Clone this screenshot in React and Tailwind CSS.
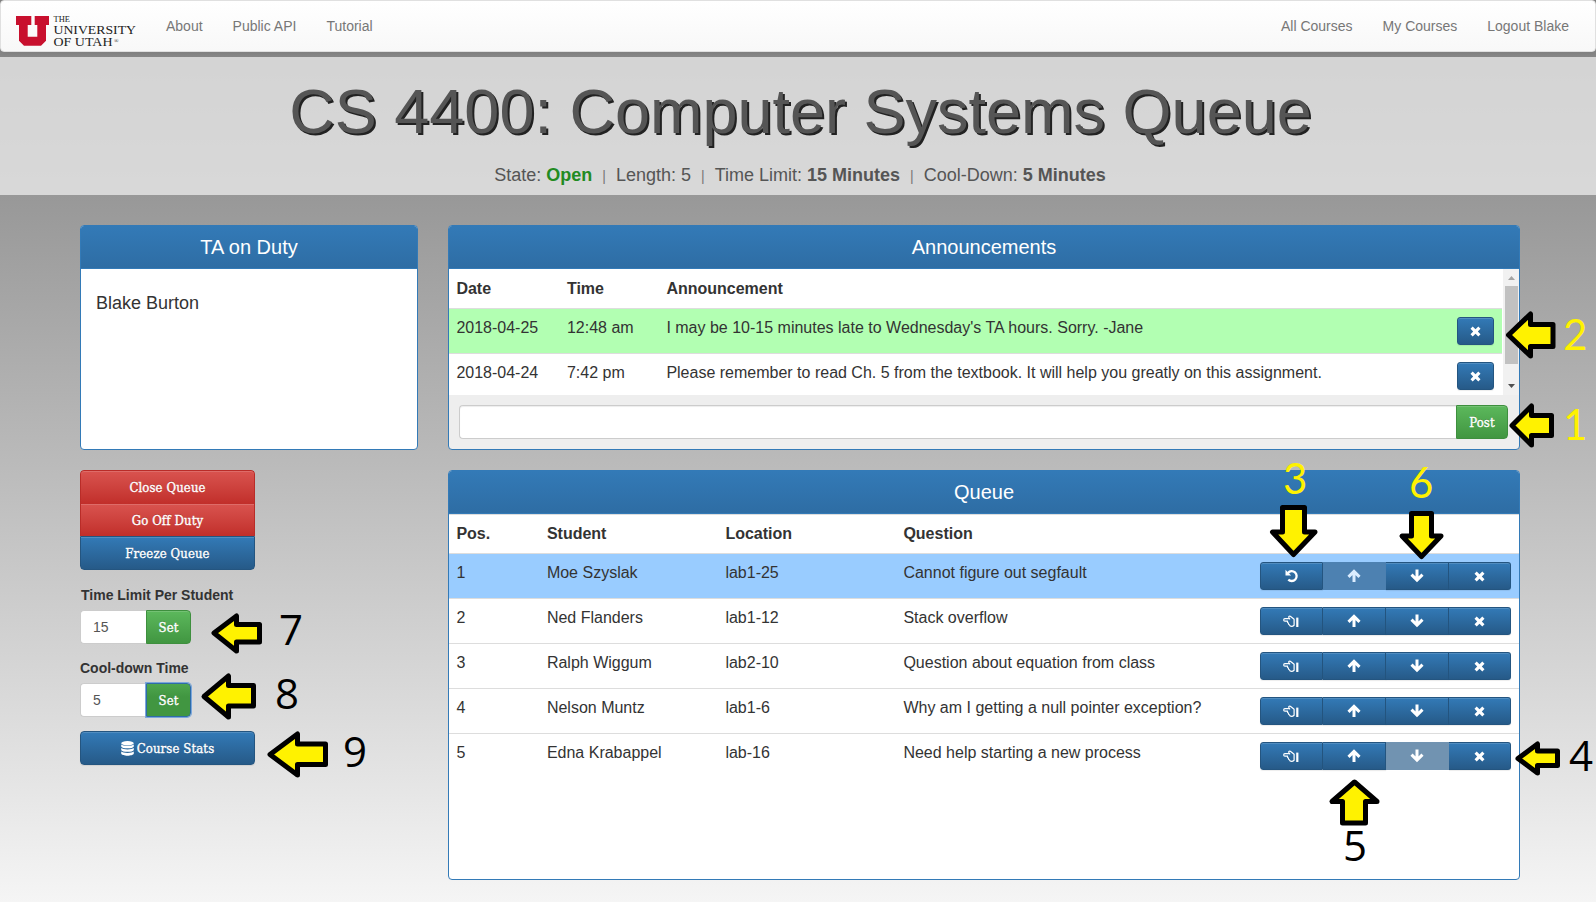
import React from "react";

const blueBtn =
  "flex items-center justify-center border border-[#245580] bg-gradient-to-b from-[#337ab7] to-[#265a88] text-white shadow-[inset_0_1px_0_rgba(255,255,255,0.15),0_1px_1px_rgba(0,0,0,0.075)]";
const disabledBtn =
  "flex items-center justify-center border border-[#265a88] bg-[#265a88] text-white opacity-65";
const redBtn =
  "flex items-center justify-center border border-[#b92c28] bg-gradient-to-b from-[#d9534f] to-[#c12e2a] text-white shadow-[inset_0_1px_0_rgba(255,255,255,0.15)]";
const greenBtn =
  "flex items-center justify-center border border-[#3e8f3e] bg-gradient-to-b from-[#5cb85c] to-[#419641] text-white shadow-[inset_0_1px_0_rgba(255,255,255,0.15)]";
const serif =
  "font-['DejaVu_Serif_Condensed','DejaVu_Serif',serif] text-[13px] tracking-[0.12px] [-webkit-text-stroke:0.35px_white] [text-shadow:0_-1px_0_rgba(0,0,0,0.2)]";

const Times = () => (
  <svg width="11" height="11" viewBox="0 0 11 11" className="block fill-white">
    <path d="M2.7 0.6 5.5 3.3 8.3 0.6 10.5 2.8 7.8 5.5 10.5 8.2 8.3 10.4 5.5 7.7 2.7 10.4 0.5 8.2 3.2 5.5 0.5 2.8z" />
  </svg>
);
const Up = () => (
  <svg width="14" height="14" viewBox="0 0 14 14" className="block">
    <path d="M7 13V3M1.500 7.900 7 2.400l5.500 5.500" fill="none" stroke="currentColor" strokeWidth="3" />
  </svg>
);
const Down = () => (
  <svg width="14" height="14" viewBox="0 0 14 14" className="block">
    <path d="M7 0.500v10M1.500 5.600 7 11.100l5.500-5.500" fill="none" stroke="currentColor" strokeWidth="3" />
  </svg>
);
const Undo = () => (
  <svg width="14" height="14" viewBox="0 0 14 14" className="block">
    <path d="M3 3.900A4.900 4.900 0 1 1 3.300 10.600" fill="none" stroke="currentColor" strokeWidth="2.300" />
    <path d="M0.500 0.800v5.600h5.600z" fill="currentColor" />
  </svg>
);
const Hand = () => (
  <svg width="16" height="14" viewBox="0 0 16 14" className="-ml-[2px] block" fill="none" stroke="currentColor" strokeWidth="1.200">
    <path d="M5.800 4.700H1.900a1.200 1.200 0 0 0 0 2.400h2.700c-.4.800 0 1.800.8 2-.1.900.3 1.500 1 1.700.3 1 1.100 1.500 2.200 1.500 1 0 1.700-.400 2.500-1.100V5.200L7.700 2.500C6.700 1.500 5.300 2.400 5.800 3.500l1.200 1.800" strokeLinejoin="round" />
    <path d="M14.300 3.600v9.400" strokeWidth="2.200" />
  </svg>
);
const Database = () => (
  <svg width="13" height="15" viewBox="0 0 13 15" className="block fill-white">
    <ellipse cx="6.500" cy="2.200" rx="6.300" ry="2.200" />
    <path d="M0.200 3.600c1.500 1.700 11.100 1.700 12.600 0v1.800c-.5 2.600-12.100 2.600-12.600 0zM0.200 7.100c1.500 1.700 11.100 1.700 12.600 0v1.800c-.5 2.600-12.100 2.600-12.600 0zM0.200 10.600c1.500 1.700 11.100 1.700 12.600 0v2c-.5 2.900-12.100 2.900-12.600 0z" />
  </svg>
);

function Heading({ children }) {
  return (
    <div className="flex h-[43px] shrink-0 items-center justify-center border-b border-[#337ab7] bg-gradient-to-b from-[#337ab7] to-[#2e6da4] text-[20px] leading-[22px] text-white">
      {children}
    </div>
  );
}

const students = [
  ["1", "Moe Szyslak", "lab1-25", "Cannot figure out segfault"],
  ["2", "Ned Flanders", "lab1-12", "Stack overflow"],
  ["3", "Ralph Wiggum", "lab2-10", "Question about equation from class"],
  ["4", "Nelson Muntz", "lab1-6", "Why am I getting a null pointer exception?"],
  ["5", "Edna Krabappel", "lab-16", "Need help starting a new process"],
];
const queueCols = "grid grid-cols-[90.5px_178.500px_178px_357px_1fr] pl-[7.400px]";
const annCols = "grid grid-cols-[110.5px_99.500px_1fr_45px] pl-[7.400px]";

// Each arrow is an outlined polygon drawn in page coordinates.
const arrows = [
  "1508.500,335 1530.5,314 1530.5,324.5 1553,324.5 1553,346.5 1530.5,346.5 1530.5,356",
  "1512,425.500 1531.5,406 1531.500,415.5 1551.5,415.5 1551.5,435.5 1531.5,435.5 1531.5,445",
  "1293.500,554.500 1272.5,532 1282.500,532 1282.500,507.500 1304.500,507.500 1304.500,532 1315,532",
  "1421.500,556.500 1402,536 1411.500,536 1411.500,513.500 1431.500,513.500 1431.500,536 1441,536",
  "1518,758.500 1537.500,744 1537.500,751 1557.500,751 1557.500,765.500 1537.500,765.500 1537.500,773",
  "1354.500,782 1332,801.500 1342.500,801.500 1342.500,823 1365.500,823 1365.500,801.500 1377,801.500",
  "214,633 236.500,616 236.500,624.500 259.500,624.500 259.500,642 236.500,642 236.500,651",
  "204,696.500 228.500,676 228.500,685.500 253.500,685.500 253.500,706 228.500,706 228.500,717",
  "270,754.500 297.500,734 297.500,744 325.500,744 325.500,764.500 297.500,764.500 297.500,775",
];

const Num = ({ className, children }) => (
  <span className={"absolute text-[42px] leading-[42px] " + className}>{children}</span>
);

export default function App() {
  return (
    <div className="relative flex h-[902px] w-[1596px] flex-col overflow-hidden bg-gradient-to-b from-[#808080] to-[#f5f5f5] font-['Liberation_Sans',Arial,sans-serif] text-[#333]">
      <nav className="flex h-[52px] shrink-0 items-center rounded-[4px] border border-[#e0e0e0] bg-gradient-to-b from-white to-[#f8f8f8] px-[15px] text-[14px] text-[#777] shadow-[0_1px_5px_rgba(0,0,0,0.075)]">
        <svg width="122" height="38" viewBox="0 0 122 38" className="mt-[6px] shrink-0">
          <path d="M0 6H15.300V15H11.700V26.700H21.300V15H18.700V6H33V15H30V30.700L25 35.700H8L3 30.700V15H0z" fill="#c8102e" />
          <g fill="#222" fontFamily="'Liberation Serif', serif">
            <text x="37.500" y="12" fontSize="8.500" textLength="16.500" lengthAdjust="spacingAndGlyphs">THE</text>
            <text x="37.500" y="23.800" fontSize="12.800" textLength="82.500" lengthAdjust="spacingAndGlyphs">UNIVERSITY</text>
            <text x="37.500" y="35.500" fontSize="12.800" textLength="59" lengthAdjust="spacingAndGlyphs">OF UTAH</text>
            <text x="98" y="32.500" fontSize="6">®</text>
          </g>
        </svg>
        <div className="ml-[28px] flex gap-[30px]">
          <span>About</span>
          <span>Public API</span>
          <span>Tutorial</span>
        </div>
        <div className="ml-auto mr-[11px] flex gap-[30px]">
          <span>All Courses</span>
          <span>My Courses</span>
          <span>Logout Blake</span>
        </div>
      </nav>

      <header className="mt-[5px] flex h-[138px] shrink-0 flex-col items-center bg-[#eeeeee]/75 pl-[4px]">
        <h1 className="mt-[19px] pl-[1px] text-[63px] leading-[70px] whitespace-nowrap text-[#555] [text-shadow:2px_2px_0_#222]">
          CS 4400: Computer Systems Queue
        </h1>
        <div className="mt-[17px] flex items-baseline whitespace-pre text-[18px] leading-[24px] text-[#555]">
          <span>State: </span>
          <b className="text-[#228b22]">Open</b>
          <span className="px-[10px] text-[14px] text-[#777]">|</span>
          <span>Length: 5</span>
          <span className="px-[10px] text-[14px] text-[#777]">|</span>
          <span>Time Limit: </span>
          <b>15 Minutes</b>
          <span className="px-[10px] text-[14px] text-[#777]">|</span>
          <span>Cool-Down: </span>
          <b>5 Minutes</b>
        </div>
      </header>

      <main className="flex gap-[30px] pt-[30px] pl-[80px]">
        <aside className="flex w-[338px] flex-col items-start">
          <section className="flex h-[225px] w-full flex-col overflow-hidden rounded-[4px] border border-[#337ab7] bg-white">
            <Heading>TA on Duty</Heading>
            <div className="px-[15px] pt-[21px] text-[18px] leading-[26px]">Blake Burton</div>
          </section>
          <div className={"mt-[20px] flex w-[175px] flex-col overflow-hidden rounded-[4px] " + serif}>
            <div className={"h-[34px] rounded-t-[4px] border-b-0 " + redBtn}>Close Queue</div>
            <div className={"h-[32px] border-t-0 border-b-0 pt-[2px] " + redBtn}>Go Off Duty</div>
            <div className={"h-[34px] rounded-b-[4px] pt-[2px] " + blueBtn}>Freeze Queue</div>
          </div>
          <b className="mt-[15px] pl-[1px] text-[14px] leading-[20px]">Time Limit Per Student</b>
          <div className="mt-[5px] flex h-[34px] w-[111px]">
            <div className="flex w-[66px] items-center rounded-l-[4px] border border-r-0 border-[#ccc] bg-white pl-[12px] text-[14px] text-[#555]">15</div>
            <div className={"w-[45px] rounded-r-[4px] pt-[2px] " + greenBtn + " " + serif}>Set</div>
          </div>
          <b className="mt-[14px] text-[14px] leading-[20px]">Cool-down Time</b>
          <div className="mt-[5px] flex h-[34px] w-[111px]">
            <div className="flex w-[66px] items-center rounded-l-[4px] border border-r-0 border-[#ccc] bg-white pl-[12px] text-[14px] text-[#555]">5</div>
            <div className={"flex w-[45px] items-center justify-center rounded-r-[4px] border border-[#2f6ca8] bg-gradient-to-b from-[#4ea64e] to-[#419641] to-40% pt-[2px] text-white shadow-[0_0_0_1px_#7ba7dc] " + serif}>Set</div>
          </div>
          <div className={"mt-[14px] h-[34px] w-[175px] gap-[3px] rounded-[4px] " + blueBtn + " " + serif}>
            <Database />
            <span className="pt-[1px]">Course Stats</span>
          </div>
        </aside>

        <div className="flex w-[1072px] flex-col gap-[20px] text-[16px]">
          <section className="flex h-[225px] flex-col overflow-hidden rounded-[4px] border border-[#337ab7] bg-[#eee]">
            <Heading>Announcements</Heading>
            <div className="flex h-[126px] shrink-0 overflow-hidden bg-white">
              <div className="flex w-[1053px] shrink-0 flex-col leading-[22px]">
                <div className={"h-[39px] shrink-0 pt-[9px] font-bold " + annCols}>
                  <span>Date</span><span>Time</span><span>Announcement</span>
                </div>
                <div className={"h-[46px] shrink-0 border-y border-[#ddd] bg-[#b2ffb2] pt-[8px] " + annCols}>
                  <span>2018-04-25</span><span>12:48 am</span>
                  <span>I may be 10-15 minutes late to Wednesday's TA hours. Sorry. -Jane</span>
                  <div className={"h-[28px] w-[37px] rounded-[3px] " + blueBtn}><Times /></div>
                </div>
                <div className={"h-[46px] shrink-0 pt-[8px] " + annCols}>
                  <span>2018-04-24</span><span>7:42 pm</span>
                  <span>Please remember to read Ch. 5 from the textbook. It will help you greatly on this assignment.</span>
                  <div className={"h-[28px] w-[37px] rounded-[3px] " + blueBtn}><Times /></div>
                </div>
              </div>
              <div className="ml-[1px] flex w-[16px] flex-col items-center bg-[#f1f1f1]">
                <svg width="15" height="17"><path d="M4 11h7L7.500 7z" fill="#a3a3a3" /></svg>
                <div className="ml-[1px] h-[78px] w-[13px] bg-[#c1c1c1]" />
                <svg width="15" height="17" className="mt-auto"><path d="M4 6h7L7.500 10z" fill="#505050" /></svg>
              </div>
            </div>
            <div className="mt-[10px] flex h-[34px] pr-[11px] pl-[10px]">
              <div className="flex-1 rounded-l-[4px] border border-r-0 border-[#ccc] bg-white shadow-[inset_0_1px_1px_rgba(0,0,0,0.075)]" />
              <div className={"w-[52px] rounded-r-[4px] pt-[2px] " + greenBtn + " " + serif}>Post</div>
            </div>
          </section>

          <section className="flex h-[410px] flex-col overflow-hidden rounded-[4px] border border-[#337ab7] bg-white leading-[22px]">
            <Heading>Queue</Heading>
            <div className={"h-[39px] border-t border-[#ddd] pt-[8px] font-bold " + queueCols}>
              <span>Pos.</span><span>Student</span><span>Location</span><span>Question</span>
            </div>
            {students.map((s, i) => (
              <div key={s[0]} className={"h-[45px] border-t border-[#ddd] pt-[8px] " + queueCols + (i === 0 ? " bg-[#99ccff]" : "")}>
                <span>{s[0]}</span><span>{s[1]}</span><span>{s[2]}</span><span>{s[3]}</span>
                <div className="-ml-[0.4px] flex h-[28px] w-[251px]">
                  <div className={"w-[63px] rounded-l-[3px] " + blueBtn}>{i === 0 ? <Undo /> : <Hand />}</div>
                  <div className={"w-[63px] border-l-0 " + (i === 0 ? disabledBtn : blueBtn)}><Up /></div>
                  <div className={"w-[63px] border-l-0 " + (i === 4 ? disabledBtn : blueBtn)}><Down /></div>
                  <div className={"w-[62px] rounded-r-[3px] border-l-0 " + blueBtn}><Times /></div>
                </div>
              </div>
            ))}
          </section>
        </div>
      </main>

      <svg width="1596" height="902" className="pointer-events-none absolute top-0 left-0">
        {arrows.map((p) => (
          <polygon key={p} points={p} fill="#fff200" stroke="#000" strokeWidth="5" strokeLinejoin="round" />
        ))}
      </svg>
      <div className="font-['Open_Sans',sans-serif] text-black">
        <Num className="top-[608px] left-[279px]">7</Num>
        <Num className="top-[672px] left-[275px]">8</Num>
        <Num className="top-[730px] left-[343px]">9</Num>
        <Num className="top-[734px] left-[1569px]">4</Num>
        <Num className="top-[824px] left-[1343px]">5</Num>
      </div>
      <div className="font-[Lato,sans-serif] text-[#fff200]">
        <Num className="top-[313px] left-[1563px]">2</Num>
        <Num className="top-[403px] left-[1563px]">1</Num>
        <Num className="top-[457px] left-[1283px]">3</Num>
        <Num className="top-[461px] left-[1409px]">6</Num>
      </div>
    </div>
  );
}
